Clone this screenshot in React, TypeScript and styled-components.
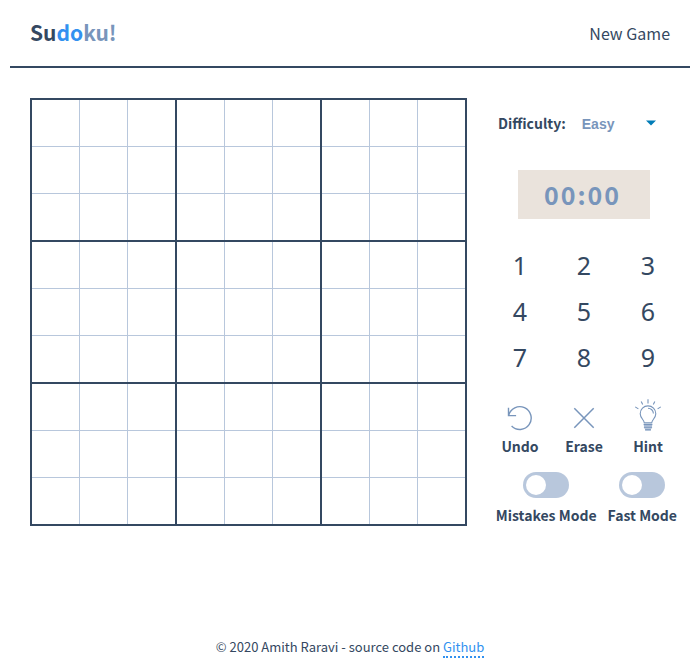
import React, { useState } from "react";
import styled, { createGlobalStyle } from "styled-components";

const ink = "#344861";
const steel = "#7895bb";
const mist = "#b8c7dc";
const azure = "#3291f0";
const sans = `"Source Sans Pro", "Noto Sans CJK SC", "Noto Sans", sans-serif`;

const GlobalStyle = createGlobalStyle`
  *, *::before, *::after { box-sizing: border-box; }
  html { height: 100%; }
  body {
    margin: 0;
    min-height: 100%;
    background: #fff;
    color: ${ink};
    font-family: ${sans};
    font-size: 14px;
    line-height: 20px;
  }
  button, input, select { font: inherit; color: inherit; }
`;

const Page = styled.div`
  display: flex;
  flex-direction: column;
  min-height: 100vh;
  padding: 0 10px;
`;

const Header = styled.header`
  display: flex;
  align-items: center;
  justify-content: space-between;
  height: 68px;
  padding: 0 20px;
  border-bottom: 2px solid ${ink};
`;

const Logo = styled.h1`
  margin: 0;
  padding-bottom: 2px;
  font-size: 21px;
  line-height: 32px;
  font-weight: 700;
`;

const LogoPart = styled.span<{ $tone: string }>`
  color: ${(p) => p.$tone};
`;

const NewGame = styled.button`
  padding: 0;
  border: 0;
  background: none;
  font-size: 16px;
  line-height: 24px;
  cursor: pointer;
`;

const Game = styled.main`
  display: grid;
  grid-template-columns: minmax(0, 1fr) 192px;
  column-gap: 21px;
  align-items: start;
  padding: 30px 10px 0 20px;
`;

const Cell = styled.td`
  height: 47px;
  padding: 0;
  border: 1px solid ${mist};
`;

const Board = styled.table`
  width: 100%;
  table-layout: fixed;
  border-collapse: collapse;
  border: 2px solid ${ink};

  tr:nth-child(3n) { border-bottom: 2px solid ${ink}; }
  tr:nth-child(3n) ${Cell} { height: 48px; }
  td:nth-child(3n) { border-right: 2px solid ${ink}; }
`;

const Panel = styled.section`
  display: flex;
  flex-direction: column;
  align-items: center;
`;

const Difficulty = styled.div`
  display: flex;
  align-items: center;
  align-self: stretch;
  gap: 12px;
  padding: 9px 20px 0 10px;
  margin-bottom: 31px;
`;

const Label = styled.label`
  font-weight: 700;
  white-space: nowrap;
  text-align: center;
`;

const SelectWrap = styled.div`
  display: grid;
  flex: 1;
  align-items: center;
  justify-items: end;

  > * { grid-area: 1 / 1; }
  svg { margin-right: 4px; pointer-events: none; }
`;

const Select = styled.select`
  width: 100%;
  height: 32px;
  padding: 2px 4px 0;
  border: 0;
  appearance: none;
  background: none;
  color: ${steel};
  font-family: "Liberation Sans", Arial, sans-serif;
  font-size: 14px;
  font-weight: 700;
`;

const Clock = styled.time`
  display: flex;
  align-items: center;
  justify-content: center;
  gap: 2px;
  width: 132px;
  height: 49px;
  padding: 0 5px 2px 0;
  background: #eae3dc;
  color: ${steel};
  font-size: 25px;
  font-weight: 700;
`;

const Keypad = styled.div`
  display: grid;
  grid-template-columns: repeat(3, 64px);
  margin-top: 23px;
`;

const Key = styled.button`
  height: 46px;
  padding: 0;
  border: 0;
  background: none;
  font-family: "Noto Sans", sans-serif;
  font-size: 25px;
  cursor: pointer;
`;

const Actions = styled.div`
  display: grid;
  grid-template-columns: repeat(3, 64px);
  margin-top: 22px;
`;

const Action = styled.button`
  display: flex;
  flex-direction: column;
  align-items: center;
  gap: 2px;
  padding: 0;
  border: 0;
  background: none;
  font-weight: 700;
  cursor: pointer;

  svg { color: ${steel}; }
`;

const Modes = styled.div`
  display: flex;
  align-self: flex-end;
  gap: 11px;
  margin: 16px 3px 0 0;
`;

const Mode = styled.div`
  display: flex;
  flex-direction: column;
  align-items: center;
  gap: 7px;
`;

const Toggle = styled.input`
  width: 46px;
  height: 26px;
  margin: 0;
  padding: 3px;
  border-radius: 13px;
  appearance: none;
  background: ${mist};
  cursor: pointer;

  &::before {
    content: "";
    display: block;
    width: 20px;
    height: 20px;
    border-radius: 50%;
    background: #fff;
  }
  &:checked { background: ${azure}; }
  &:checked::before { margin-left: auto; }
`;

const Footer = styled.footer`
  margin-top: auto;
  text-align: center;
  font-size: 13px;
  line-height: 18px;
`;

const FooterLink = styled.a`
  display: inline-block;
  color: ${azure};
  text-decoration: none;
  border-bottom: 2px dotted ${azure};
`;

const UndoIcon = () => (
  <svg width="32" height="32" viewBox="0 0 32 32" fill="none" stroke="currentColor" strokeWidth="1.4" aria-hidden="true">
    <path d="M4.5 5.8v7.8h7.6M4.7 13.4A11.4 11.4 0 1 1 7.6 24" />
  </svg>
);

const EraseIcon = () => (
  <svg width="32" height="32" viewBox="0 0 32 32" fill="none" stroke="currentColor" strokeWidth="1.5" aria-hidden="true">
    <path d="M6.3 6.3l19.4 19.4M25.7 6.3L6.3 25.7" />
  </svg>
);

const HintIcon = () => (
  <svg width="32" height="32" viewBox="0 0 32 32" fill="none" stroke="currentColor" strokeWidth="1.1" overflow="visible" aria-hidden="true">
    <path d="M12.3 20.9c0-3-4.1-4.8-4.1-9.2a7.8 7.8 0 0 1 15.6 0c0 4.4-4.1 6.2-4.1 9.2z" />
    <path d="M16 6.2a5.4 5.4 0 0 1 5.4 5.3" />
    <path d="M12 21.5h8v4.5l-2 2.3h-4l-2-2.3z" fill={mist} stroke="none" />
    <path d="M11.6 22.6h8.8M11.9 25.2h8.2M13 27.9h6" strokeWidth="1.1" />
    <path d="M16 -2.8v4.2M9.2 -.5l1.5 3M22.8 -.5l-1.5 3M3.2 4.9l3.2 2M28.8 4.9l-3.2 2" />
  </svg>
);

const actions = [
  { name: "Undo", Icon: UndoIcon },
  { name: "Erase", Icon: EraseIcon },
  { name: "Hint", Icon: HintIcon },
];

const modes = [
  { id: "mistakes", name: "Mistakes Mode" },
  { id: "fast", name: "Fast Mode" },
];

const nine = Array.from({ length: 9 }, (_, i) => i + 1);

export default function App() {
  const [level, setLevel] = useState("Easy");

  return (
    <>
      <GlobalStyle />
      <Page>
        <Header>
          <Logo>
            <LogoPart $tone={ink}>Su</LogoPart>
            <LogoPart $tone={azure}>do</LogoPart>
            <LogoPart $tone={steel}>ku!</LogoPart>
          </Logo>
          <NewGame type="button">New Game</NewGame>
        </Header>
        <Game>
          <Board aria-label="Sudoku board">
            <tbody>
              {nine.map((row) => (
                <tr key={row}>
                  {nine.map((col) => (
                    <Cell key={col} />
                  ))}
                </tr>
              ))}
            </tbody>
          </Board>
          <Panel>
            <Difficulty>
              <Label htmlFor="difficulty">Difficulty:</Label>
              <SelectWrap>
                <Select id="difficulty" value={level} onChange={(e) => setLevel(e.target.value)}>
                  <option>Easy</option>
                  <option>Medium</option>
                  <option>Hard</option>
                </Select>
                <svg width="10" height="6" viewBox="0 0 10 6" aria-hidden="true">
                  <path d="M0 0.5h10L5 5.5z" fill="#007cb7" />
                </svg>
              </SelectWrap>
            </Difficulty>
            <Clock>
              <span>0</span>
              <span>0</span>
              <span>:</span>
              <span>0</span>
              <span>0</span>
            </Clock>
            <Keypad>
              {nine.map((n) => (
                <Key key={n} type="button">
                  {n}
                </Key>
              ))}
            </Keypad>
            <Actions>
              {actions.map(({ name, Icon }) => (
                <Action key={name} type="button">
                  <Icon />
                  {name}
                </Action>
              ))}
            </Actions>
            <Modes>
              {modes.map(({ id, name }) => (
                <Mode key={id}>
                  <Toggle id={id} type="checkbox" role="switch" />
                  <Label htmlFor={id}>{name}</Label>
                </Mode>
              ))}
            </Modes>
          </Panel>
        </Game>
        <Footer>
          © 2020 Amith Raravi - source code on <FooterLink href="https://github.com">Github</FooterLink>
        </Footer>
      </Page>
    </>
  );
}
